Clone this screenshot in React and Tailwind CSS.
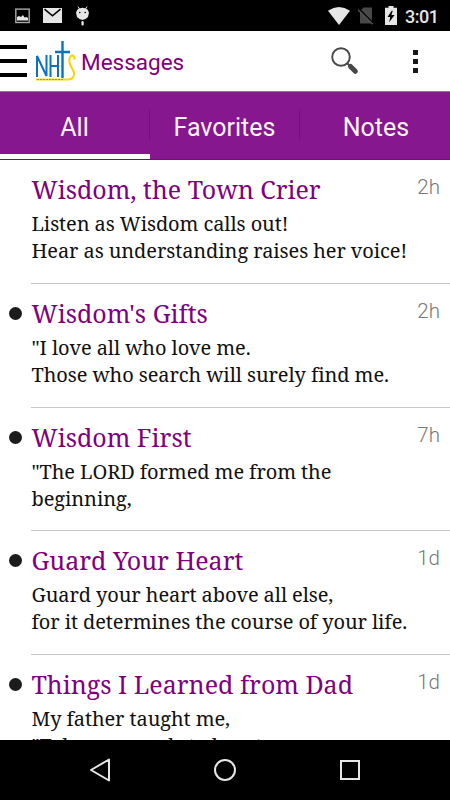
const messages = [
  {
    title: 'Wisdom, the Town Crier',
    lines: ['Listen as Wisdom calls out!', 'Hear as understanding raises her voice!'],
    age: '2h',
    unread: false,
  },
  {
    title: "Wisdom's Gifts",
    lines: ['"I love all who love me.', 'Those who search will surely find me.'],
    age: '2h',
    unread: true,
  },
  {
    title: 'Wisdom First',
    lines: ['"The LORD formed me from the', 'beginning,'],
    age: '7h',
    unread: true,
  },
  {
    title: 'Guard Your Heart',
    lines: ['Guard your heart above all else,', 'for it determines the course of your life.'],
    age: '1d',
    unread: true,
  },
  {
    title: 'Things I Learned from Dad',
    lines: ['My father taught me,', '"Take my words to heart.'],
    age: '1d',
    unread: true,
  },
]

function StatusBar() {
  return (
    <div className="flex h-[31px] shrink-0 items-center bg-black pl-[15px] pr-[12px] text-[#e6e6e6]">
      <svg className="h-[16px] w-[15px]" viewBox="0 0 15 16">
        <rect x="0.8" y="1.1" width="13.4" height="13.4" fill="none" stroke="#a8a8a8" strokeWidth="1.4" />
        <path d="M2 12.5V9l2-1 2 1 2-2 1.500 2.500 2-.5 1.500 1v2.500z" fill="#e6e6e6" />
      </svg>
      <svg className="ml-[13px] h-[15px] w-[19px]" viewBox="0 0 19 15" fill="currentColor">
        <rect width="19" height="15" />
        <path d="M1.500 1.200 9.500 7.800 17.500 1.200" fill="none" stroke="#000" strokeWidth="1.500" />
      </svg>
      <svg className="ml-[14px] h-[20px] w-[13px]" viewBox="0 0 13 20" fill="currentColor">
        <path d="M2 .5 3.500 3M11 .5 9.500 3" stroke="currentColor" strokeWidth="1" />
        <path d="M1.500 3.500Q6.500 0 11.500 3.500L13 6.500 12 11Q6.500 17 1 11L0 6.500z" />
        <rect x="5.400" y="15" width="2.300" height="4.500" rx="1" />
        <circle cx="3.800" cy="6.500" r=".8" fill="#000" />
        <circle cx="9.200" cy="6.500" r=".8" fill="#000" />
      </svg>
      <svg className="ml-auto h-[18px] w-[22px]" viewBox="0 0 22 18" fill="currentColor">
        <path d="M0 3.800Q11-3.600 22 3.800L11 18z" />
      </svg>
      <svg className="ml-[8px] h-[18px] w-[17px]" viewBox="0 0 17 18">
        <path d="M2 4.500 5.500.5H14V16.500H2z" fill="#484848" />
        <path d="M.6 2.200 15.500 17" stroke="#000" strokeWidth="2.400" />
        <path d="M0 2.800 14.800 17.200" stroke="#585858" strokeWidth="1.200" />
      </svg>
      <svg className="ml-[10px] h-[19px] w-[12px]" viewBox="0 0 12 19" fill="currentColor">
        <path d="M3.500 0h5v1.800H12V19H0V1.800h3.500z" />
        <path d="M6.700 4.800 2.500 11h2.700l-1 5.200L9.600 9H6.400L7.800 4.800z" fill="#000" />
      </svg>
      <span className="ml-[8px] w-[33px] whitespace-nowrap pt-[2px] text-[18px] font-medium leading-none tracking-[-0.5px]">3:01</span>
    </div>
  )
}

function Header() {
  return (
    <header className="flex h-[60px] shrink-0 items-center bg-white">
      <div className="flex w-[27px] flex-col gap-[10px]">
        <span className="h-[4px] bg-black" />
        <span className="h-[4px] bg-black" />
        <span className="h-[4px] bg-black" />
      </div>
      <svg className="ml-[8px] mt-[2px] h-[42px] w-[41px]" viewBox="0 0 41 42" fill="none">
        <g stroke="#0b72bd" strokeWidth="2">
          <path d="M2 36V15L11.500 35V14M15.500 14V36M23 14V36M15.500 25H23" />
          <path d="M27.500 0V37M20 11H35" strokeWidth="2.400" />
        </g>
        <path d="M1 38.500H33C38 38.500 39.500 35 39 31.500C38.500 28 34.500 26 34.300 20C34.200 16 36 14 38 14.500Q39.500 15.200 39.500 18.500" stroke="#f8d60c" strokeWidth="2.100" />
        <path d="M2 38.500H29" stroke="#8c8740" strokeWidth=".8" strokeDasharray="2 1" />
      </svg>
      <h1 className="ml-[5px] pt-[2px] text-[22.500px] font-normal leading-none text-[#800080]">Messages</h1>
      <svg className="ml-auto h-[28px] w-[28px]" viewBox="0 0 28 28" fill="none" stroke="#484848">
        <circle cx="10" cy="10" r="8.800" strokeWidth="1.900" />
        <path d="m16 16 4 4" strokeWidth="2" />
        <path d="m19.500 19.500 4.800 4.800" strokeWidth="5" strokeLinecap="round" />
      </svg>
      <div className="ml-[54px] mr-[32px] flex w-[5px] flex-col gap-[4px]">
        <span className="h-[5px] bg-[#181818]" />
        <span className="h-[5px] bg-[#181818]" />
        <span className="h-[5px] bg-[#181818]" />
      </div>
    </header>
  )
}

function Tabs() {
  return (
    <nav className="grid h-[69px] shrink-0 grid-cols-3 border-b border-t border-b-[#74107b] border-t-[#8a758c] bg-[#86178e] text-[25px] text-[#fbf3fc]">
      <div className="flex items-center border-b-[5px] border-white pt-[5px]">
        <span className="h-[31px] flex-1 border-r border-[#751080] pt-[2px] text-center leading-[31px]">All</span>
      </div>
      <div className="flex items-center">
        <span className="h-[31px] flex-1 border-r border-[#751080] pt-[2px] text-center leading-[31px]">Favorites</span>
      </div>
      <div className="flex items-center">
        <span className="h-[31px] flex-1 pl-[2px] pt-[2px] text-center leading-[31px]">Notes</span>
      </div>
    </nav>
  )
}

function Message({ title, lines, age, unread }) {
  return (
    <li className="flex h-[123.8px] shrink-0">
      <div className="w-[31px] shrink-0 pl-[9px] pt-[23px]">
        {unread && <div className="size-[13px] rounded-full bg-[#1c1c1c]" />}
      </div>
      <div className="flex-1 border-b border-[#c6c6c6] pt-[12px]">
        <div className="flex justify-between pr-[10px]">
          <h2 className="whitespace-nowrap pl-[0.500px] font-['Noto_Serif','Droid_Serif',serif] text-[25px] leading-[34px] text-[#800080] [font-variant-ligatures:none]">
            {title}
          </h2>
          <span className="pt-px text-[20.500px] font-light leading-[28px] text-[#777]">{age}</span>
        </div>
        <div className="whitespace-nowrap pl-[0.500px] pt-[4px] font-['Noto_Serif','Droid_Serif',serif] text-[20px] leading-[27px] tracking-[-0.09px] text-[#111] [font-variant-ligatures:none]">
          {lines.map((line) => (
            <p key={line}>{line}</p>
          ))}
        </div>
      </div>
    </li>
  )
}

function NavigationBar() {
  return (
    <div className="flex h-[60px] shrink-0 items-center bg-black pl-[88px] pr-[88px]">
      <div className="flex flex-1 items-center justify-between">
        <svg className="size-[24px]" viewBox="0 0 24 24" fill="none" stroke="#e6e6e6" strokeWidth="2">
          <path d="M21 1.500V22.500L3 12z" strokeLinejoin="round" />
        </svg>
        <svg className="size-[24px]" viewBox="0 0 24 24" fill="none" stroke="#e6e6e6" strokeWidth="2">
          <circle cx="12" cy="12" r="10" />
        </svg>
        <svg className="size-[24px]" viewBox="0 0 24 24" fill="none" stroke="#e6e6e6" strokeWidth="2">
          <rect x="3" y="3" width="18" height="18" />
        </svg>
      </div>
    </div>
  )
}

export default function App() {
  return (
    <div className="flex h-[800px] w-[450px] flex-col overflow-hidden bg-white font-[Roboto,sans-serif]">
      <StatusBar />
      <Header />
      <Tabs />
      <ul className="min-h-0 flex-1 overflow-hidden">
        {messages.map((message) => (
          <Message key={message.title} {...message} />
        ))}
      </ul>
      <NavigationBar />
    </div>
  )
}
